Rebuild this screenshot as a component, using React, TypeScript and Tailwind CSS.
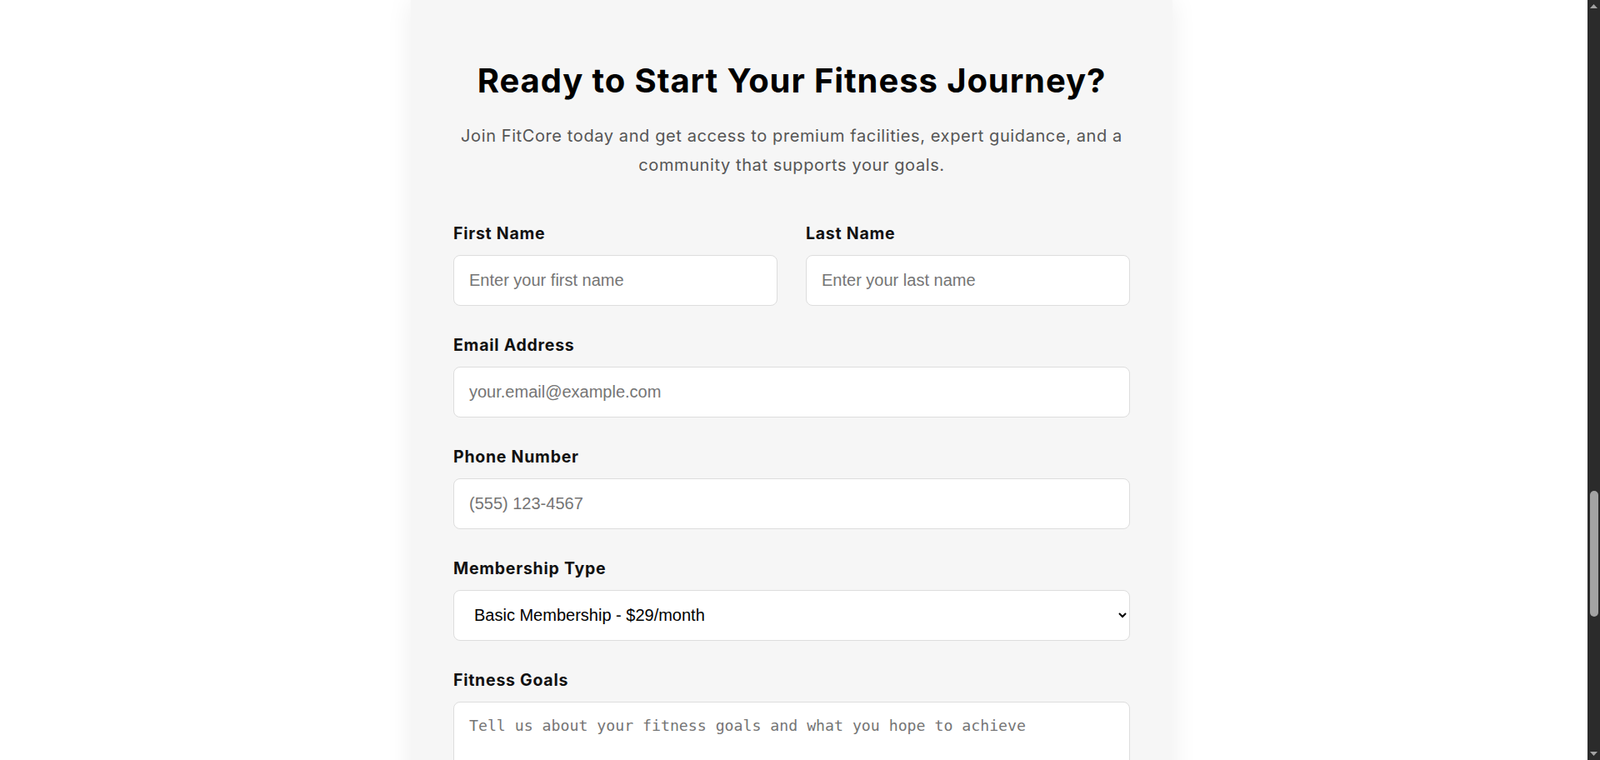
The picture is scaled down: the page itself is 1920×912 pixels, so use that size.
import React from "react";

const labelCls =
  "block pt-[1px] text-[19.5px] leading-[27px] font-bold tracking-[0.75px] text-[#111111] mb-[11.5px] font-['Inter',sans-serif]";
const inputCls =
  "block w-full h-[61px] rounded-lg border border-[#dddddd] bg-white px-[18px] py-[18px] text-[20px] text-black font-['Liberation_Sans',Arial,sans-serif] placeholder:text-[#757575] outline-none";

function Field({
  label,
  children,
}: {
  label: string;
  children: React.ReactNode;
}) {
  return (
    <div className="mb-[33.5px]">
      <label className={labelCls}>{label}</label>
      {children}
    </div>
  );
}

function FakeScrollbar() {
  return (
    <div className="fixed right-0 top-0 flex h-screen w-[15px] flex-col items-center bg-[#2b2b2b]">
      <div className="flex h-[15px] w-full items-center justify-center">
        <svg width="9" height="6" viewBox="0 0 9 6">
          <polygon points="4.5,0 9,5 0,5" fill="#a3a3a3" />
        </svg>
      </div>
      <div className="flex w-full flex-1 flex-col items-center">
        <div className="mt-[574px] h-[151px] w-[10px] rounded-[5px] bg-[#a3a3a3]" />
      </div>
      <div className="flex h-[15px] w-full items-center justify-center">
        <svg width="9" height="6" viewBox="0 0 9 6">
          <polygon points="0,0 9,0 4.5,5" fill="#a3a3a3" />
        </svg>
      </div>
    </div>
  );
}

export default function App() {
  return (
    <div className="min-h-screen bg-white">
      <div className="flex justify-center pr-[20px] pb-[80px]">
        <section className="w-[914px] bg-[#f6f6f6] px-[51px] pt-[73px] pb-[60px] shadow-[0_0_30px_rgba(0,0,0,0.07)]">
          <h2 className="text-center text-[40px] leading-[48px] font-bold tracking-[0.9px] text-black font-['Inter',sans-serif]">
            Ready to Start Your Fitness Journey?
          </h2>
          <p className="mt-[25px] text-center text-[20px] leading-[35px] tracking-[0.6px] text-[#555555] font-['Inter',sans-serif]">
            Join FitCore today and get access to premium facilities, expert guidance, and a
            <br />
            community that supports your goals.
          </p>

          <form className="mt-[50px]" onSubmit={(e) => e.preventDefault()}>
            <div className="grid grid-cols-2 gap-x-[34px]">
              <Field label="First Name">
                <input type="text" placeholder="Enter your first name" className={inputCls} />
              </Field>
              <Field label="Last Name">
                <input type="text" placeholder="Enter your last name" className={inputCls} />
              </Field>
            </div>
            <Field label="Email Address">
              <input type="email" placeholder="your.email@example.com" className={inputCls} />
            </Field>
            <Field label="Phone Number">
              <input type="tel" placeholder="(555) 123-4567" className={inputCls} />
            </Field>
            <Field label="Membership Type">
              <select
                className="block w-full h-[61px] rounded-lg border border-[#dddddd] bg-white pl-[20px] pr-[22px] text-[20px] text-black font-['Liberation_Sans',Arial,sans-serif] outline-none"
                defaultValue="basic"
              >
                <option value="basic">Basic Membership - $29/month</option>
                <option value="premium">Premium Membership - $59/month</option>
                <option value="elite">Elite Membership - $99/month</option>
              </select>
            </Field>
            <Field label="Fitness Goals">
              <textarea
                rows={5}
                placeholder="Tell us about your fitness goals and what you hope to achieve"
                className="block w-full rounded-lg border border-[#dddddd] bg-white px-[18px] pt-[14px] pb-[18px] text-[18.2px] leading-[28px] text-black font-['DejaVu_Sans_Mono',monospace] placeholder:text-[#757575] outline-none resize-y"
              />
            </Field>
            <button
              type="submit"
              className="block w-full rounded-lg bg-black py-[18px] text-[18px] font-semibold text-white font-['Inter',sans-serif]"
            >
              Start Your Journey
            </button>
          </form>
        </section>
      </div>
      <FakeScrollbar />
    </div>
  );
}
